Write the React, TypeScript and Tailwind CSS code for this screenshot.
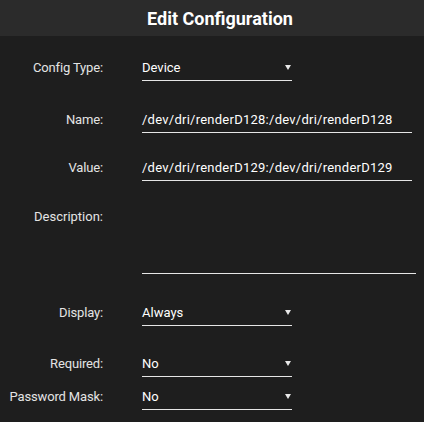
type Row = {
  label: string;
  value: string;
  kind: 'select' | 'text' | 'area';
  gap: string;
};

const rows: Row[] = [
  { label: 'Config Type:', value: 'Device', kind: 'select', gap: 'mt-[19px]' },
  { label: 'Name:', value: '/dev/dri/renderD128:/dev/dri/renderD128', kind: 'text', gap: 'mt-[26px]' },
  { label: 'Value:', value: '/dev/dri/renderD129:/dev/dri/renderD129', kind: 'text', gap: 'mt-[22px]' },
  { label: 'Description:', value: '', kind: 'area', gap: 'mt-[22px]' },
  { label: 'Display:', value: 'Always', kind: 'select', gap: 'mt-[26px]' },
  { label: 'Required:', value: 'No', kind: 'select', gap: 'mt-[25px]' },
  { label: 'Password Mask:', value: 'No', kind: 'select', gap: 'mt-[7px]' },
];

function Arrow() {
  return (
    <svg width="6" height="5" viewBox="0 0 6 5" className="shrink-0">
      <polygon points="0,0 6,0 3,5" fill="#e8e8e8" />
    </svg>
  );
}

function Field({ row }: { row: Row }) {
  if (row.kind === 'area') {
    return (
      <div className={`flex ${row.gap}`}>
        <div className="w-[103px] text-right pt-[6px] leading-[16px]">{row.label}</div>
        <div className="ml-[39px] w-[274px] h-[71px] border-b border-[#e6e6e6]" />
      </div>
    );
  }
  return (
    <div className={`flex items-center ${row.gap}`}>
      <div className="w-[103px] text-right leading-[16px] tracking-[-0.15px]">{row.label}</div>
      {row.kind === 'select' ? (
        <div className="ml-[39px] w-[150px] h-[26px] border-b border-[#e6e6e6] flex items-center justify-between pr-[1px]">
          <span className="text-white">{row.value}</span>
          <Arrow />
        </div>
      ) : (
        <div className="ml-[39px] w-[270px] h-[26px] border-b border-[#e6e6e6] flex items-center">
          <span className="text-white whitespace-nowrap tracking-[0.25px]">{row.value}</span>
        </div>
      )}
    </div>
  );
}

export default function App() {
  return (
    <div className="w-[424px] h-[422px] bg-[#1e1e1e] text-[#e4e4e4] text-[13px] font-['Roboto',sans-serif] overflow-hidden">
      <div className="h-[36px] bg-[#2b2b2b] flex items-center justify-center pl-4">
        <h1 className="text-[18px] font-bold text-white">Edit Configuration</h1>
      </div>
      <div className="flex flex-col">
        {rows.map((r) => (
          <Field key={r.label} row={r} />
        ))}
      </div>
    </div>
  );
}
